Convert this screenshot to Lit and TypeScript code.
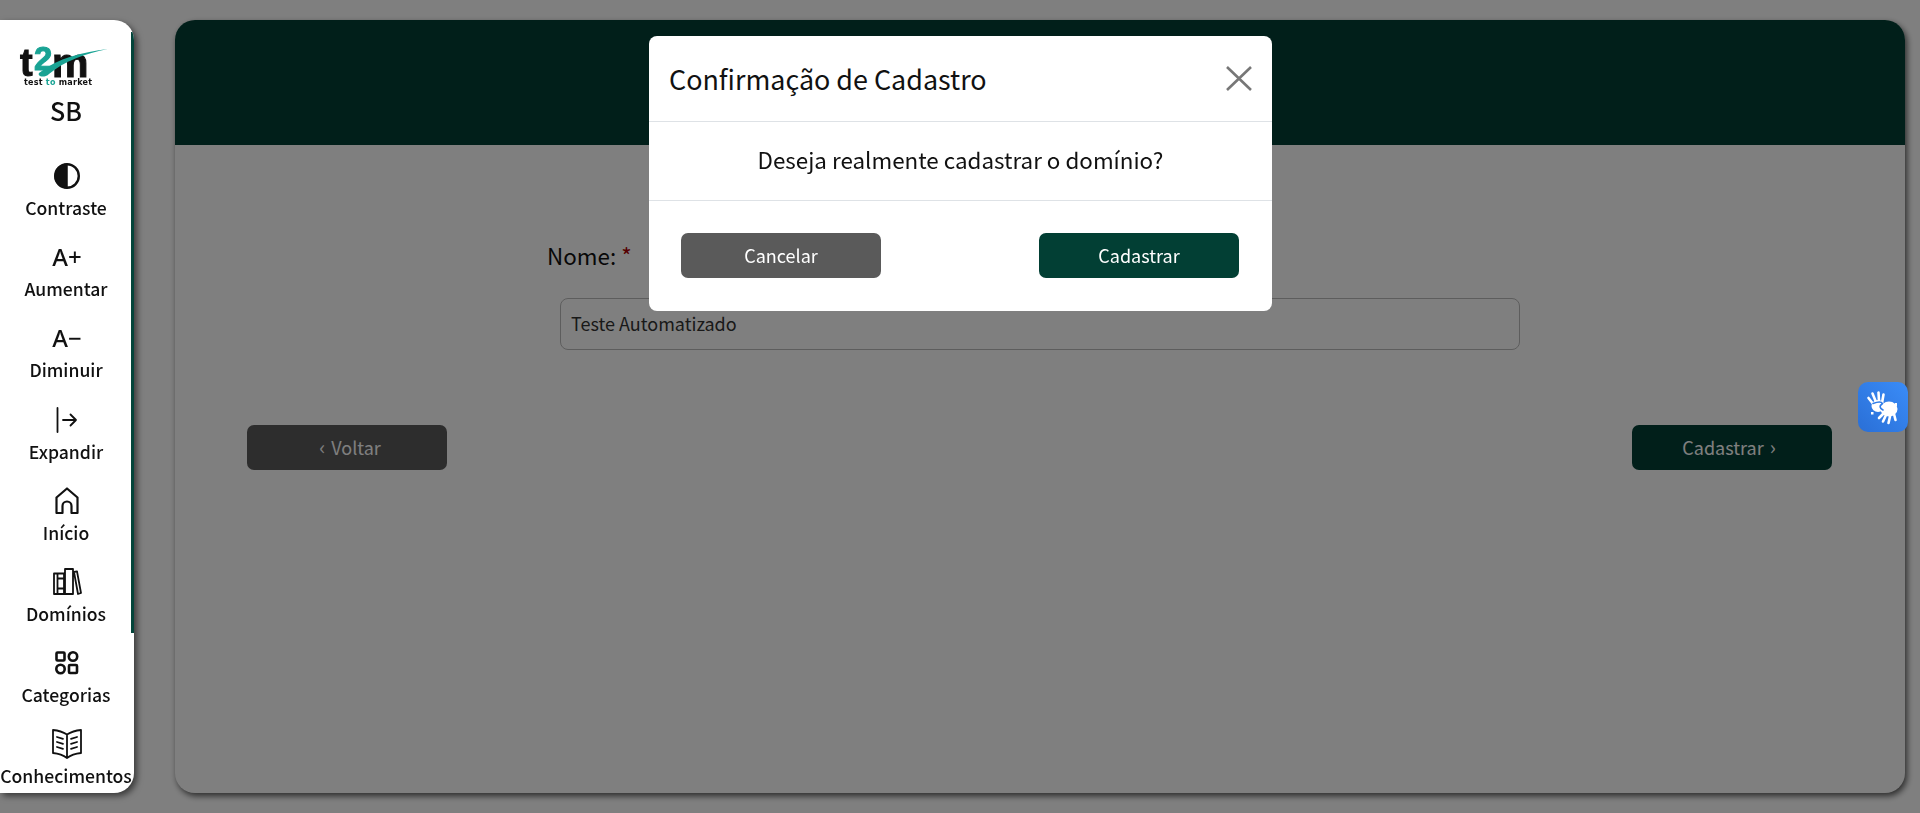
import { LitElement, html, css, svg } from "lit";
import { customElement } from "lit/decorators.js";

const I = (body: unknown, vb: string, w: number, h: number) => html`<svg style="width:${w}px;height:${h}px" class="icon" viewBox=${vb} fill="none" stroke="#111" stroke-width="1.5" stroke-linecap="round" stroke-linejoin="round">${body}</svg>`;

const items = [
  { label: "Contraste", icon: I(svg`<circle cx="13" cy="13" r="11.800" stroke-width="2.400"/><path d="M13 1.200a11.800 11.800 0 0 0 0 23.600z" fill="#111"/>`, "0 0 26 26", 26, 26) },
  { label: "Aumentar", glyph: "A+" },
  { label: "Diminuir", glyph: "A−" },
  { label: "Expandir", icon: I(svg`<path d="M1.500 1v24" stroke-width="1.800"/><path d="M7 13h13M14.500 7.500 20 13l-5.500 5.500" stroke-width="1.800"/>`, "0 0 22 26", 22, 26) },
  { label: "Início", icon: I(svg`<path d="M1.500 26V10.500L12 1.500 22.500 10.500V26h-6v-7a4.500 4.500 0 0 0-9 0v7z" stroke-width="2.200"/>`, "0 0 24 28", 24, 28) },
  { label: "Domínios", icon: I(svg`<path d="M1 5.500h3.500V26H1zM4.500 5.500h6.500V26H4.500zM4.500 10.500h6.500M4.500 20.500h6.500M12 1h8v25h-8zM21 4l3-.7 4 21.700-3 1z" stroke-width="1.800"/>`, "0 0 29 27", 29, 27) },
  { label: "Categorias", icon: I(svg`<rect x="1.500" y="1.500" width="8" height="8" rx="1" stroke-width="2.600"/><circle cx="18" cy="5.500" r="4.200" stroke-width="2.600"/><circle cx="5.500" cy="18" r="4.200" stroke-width="2.600"/><rect x="14" y="14" width="8" height="8" rx="1" stroke-width="2.600"/>`, "0 0 24 24", 24, 24) },
  { label: "Conhecimentos", icon: I(svg`<path d="M15 5.500C11 3 6 1.500 1 1v23c5 .500 10 2 14 5 4-3 9-4.500 14-5V1C24 1.500 19 3 15 5.500zM15 5.500V29" stroke-width="1.800"/><path d="M5 8l6 1.800M5 13l6 1.800M5 18l6 1.800M19 9.800 25 8M19 14.800 25 13M19 19.800 25 18" stroke-width="1.800"/>`, "0 0 30 30", 30, 30) },
];

@customElement("app-root")
export class AppRoot extends LitElement {
  static styles = css`
    :host { display: block; font-family: "Noto Sans CJK SC", "Noto Sans", sans-serif; color: #212529; }
    * { box-sizing: border-box; }
    .page { display: flex; height: 813px; padding: 20px 15px 20px 0; gap: 41px; background: #fff; overflow: hidden; }
    .side { position: relative; z-index: 20; width: 134px; flex: none; background: #fff; border-radius: 0 20px 20px 0; box-shadow: 3px 3px 6px rgba(0,0,0,.55); display: flex; flex-direction: column; align-items: center; padding-top: 24px; overflow: hidden; }
    .strip { position: absolute; right: 0; top: 12px; width: 3px; height: 601px; background: #03443a; }
    .logo { width: 92px; height: 42px; display: block; flex: none; margin-right: 6px; overflow: visible; }
    .lg { font-family: "Liberation Sans", sans-serif; font-weight: 700; }
    .tag { font-family: "DejaVu Sans", sans-serif; font-weight: 700; font-size: 8px; }
    .sb { font-size: 25px; line-height: 30px; color: #111; margin: 9px 2px 0 0; height: 56px; flex: none; font-weight: 500; text-align: center; }
    .item { width: 134px; height: 81.200px; display: flex; flex-direction: column; align-items: center; flex: none; }
    .ic { height: 50px; display: flex; align-items: center; justify-content: center; flex: none; }
    .icon { display: block; }
    .glyph { font: 500 24px/1 "Noto Sans", sans-serif; color: #111; }
    .lbl { font-size: 17.600px; font-weight: 500; line-height: 24px; color: #111; white-space: nowrap; margin: -5px 2px 0 0; }
    .main { flex: 1; display: flex; flex-direction: column; border-radius: 20px; background: #fff; box-shadow: 2px 3px 6px rgba(0,0,0,.65); overflow: hidden; }
    .hero { height: 125px; background: #023f34; flex: none; }
    .form { display: flex; flex-direction: column; padding: 0 73px 0 72px; }
    .field { margin: 93px 0 0 300px; font-size: 22.400px; line-height: 34px; height: 34px; color: #111; }
    .field span { color: #a00; }
    .input { margin: 26px 0 0 313px; width: 960px; height: 52px; border: 1px solid #bbb; border-radius: 8px; padding: 0 10px 2px; display: flex; align-items: center; font-size: 18px; color: #333; }
    .acts { display: flex; justify-content: space-between; margin-top: 75px; }
    .btn { width: 200px; height: 45px; border-radius: 7px; display: flex; align-items: center; justify-content: center; color: #fff; font-size: 18px; background: #5a5a5a; padding-bottom: 2px; }
    .btn.go { background: #023f34; }
    .chev { font-size: 20px; margin: 0 6px; }
    .veil { position: fixed; inset: 0; background: rgba(0,0,0,.5); z-index: 10; }
    .modal-wrap { position: fixed; inset: 0; z-index: 30; display: flex; justify-content: center; padding: 36px 0 0 1px; pointer-events: none; }
    .modal { width: 623px; height: 275px; background: #fff; border-radius: 8px; display: flex; flex-direction: column; }
    .m-head { height: 86px; border-bottom: 1px solid #dee2e6; display: flex; align-items: center; justify-content: space-between; padding: 0 20px 1px 20px; }
    .m-head h2 { margin: 2px 0 0; font-size: 26.900px; font-weight: 400; color: #111; line-height: 1; }
    .m-body { height: 79px; border-bottom: 1px solid #dee2e6; display: flex; align-items: center; justify-content: center; font-size: 22.400px; color: #111; padding-bottom: 4px; }
    .m-foot { flex: 1; display: flex; justify-content: space-between; padding: 32px 33px 0 32px; }
    .x { width: 26px; height: 25px; display: block; }
    .libras { position: fixed; z-index: 40; left: 1858px; top: 382px; width: 50px; height: 50px; border-radius: 10px; background: linear-gradient(45deg, #2a6fd6, #3a8cf8); }
    .libras svg { display: block; }
  `;

  render() {
    return html`
      <div class="page">
        <aside class="side">
          <div class="strip"></div>
          <svg class="logo" viewBox="0 0 92 42">
            <text class="lg" x="2" y="32" font-size="38" fill="#111" stroke="#111" stroke-width="1">t</text>
            <text class="lg" x="34" y="32.500" font-size="41" fill="#111" stroke="#111" stroke-width="1">m</text>
            <path d="M21 29C40 14 65 8 90 5 68 9 45 18 31 30 27 34 19 33 21 29z" fill="#19a394"/>
            <text class="lg" x="16" y="26" font-size="33" fill="#19a394" stroke="#19a394" stroke-width="1">2</text>
            <text class="tag" x="6" y="40.500" fill="#111" textLength="68" lengthAdjust="spacing">test <tspan fill="#19a394">to</tspan> market</text>
          </svg>
          <div class="sb">SB</div>
          ${items.map(i => html`<div class="item"><div class="ic">${i.glyph ? html`<span class="glyph">${i.glyph}</span>` : i.icon}</div><div class="lbl">${i.label}</div></div>`)}
        </aside>
        <main class="main">
          <div class="hero"></div>
          <div class="form">
            <div class="field">Nome: <span>*</span></div>
            <div class="input">Teste Automatizado</div>
            <div class="acts">
              <div class="btn"><span class="chev">‹</span>Voltar</div>
              <div class="btn go">Cadastrar<span class="chev">›</span></div>
            </div>
          </div>
        </main>
      </div>
      <div class="veil"></div>
      <div class="modal-wrap">
        <div class="modal">
          <div class="m-head"><h2>Confirmação de Cadastro</h2>
            <svg class="x" viewBox="0 0 26 25"><path d="M1 1 25 24M25 1 1 24" stroke="#777" stroke-width="2.600" fill="none"/></svg>
          </div>
          <div class="m-body">Deseja realmente cadastrar o domínio?</div>
          <div class="m-foot">
            <div class="btn">Cancelar</div>
            <div class="btn go">Cadastrar</div>
          </div>
        </div>
      </div>
      <div class="libras">
        <svg width="50" height="50" viewBox="0 0 50 50" fill="#fff" stroke="#fff" stroke-linecap="round">
          <g stroke-width="2.600" fill="none">
            <path d="M16 23 10.500 16M18 20 14.500 11.500M21 19 20.500 10.500M24 21 25.500 12.500"/>
            <path d="M26 31 21 36M28 33 25 39.500M32 34.500 30.500 41M36 32 37.500 38"/>
          </g>
          <ellipse cx="20" cy="24" rx="6.500" ry="6" stroke="none"/>
          <ellipse cx="31" cy="27" rx="8.500" ry="7.500" stroke="none"/>
          <path d="M15 21.500Q23 18.500 24.500 21.500 19.500 25 25 28" fill="none" stroke="#2f7ce8" stroke-width="1.600"/>
          <rect x="37" y="21" width="2" height="3" stroke="none"/><rect x="13" y="30" width="2.500" height="2.500" stroke="none"/>
        </svg>
      </div>
    `;
  }
}
